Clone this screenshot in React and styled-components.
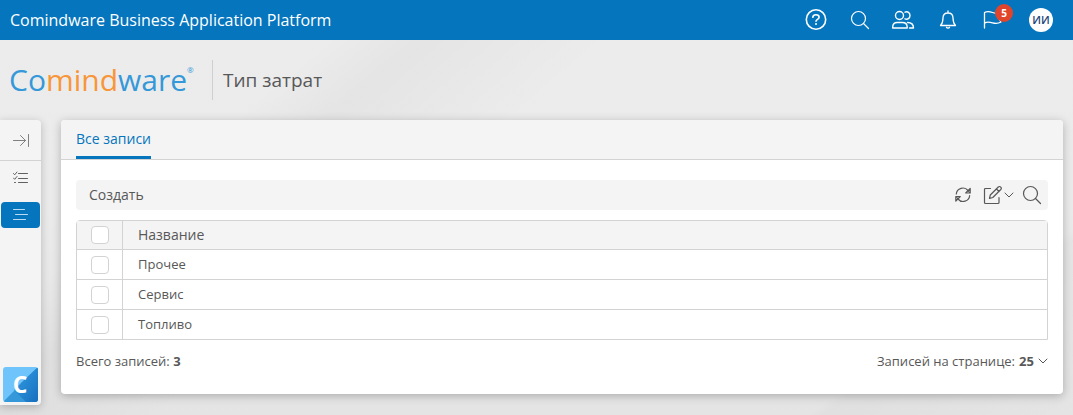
import styled, { createGlobalStyle } from 'styled-components';

const GlobalStyle = createGlobalStyle`
  * {
    box-sizing: border-box;
  }

  body {
    margin: 0;
    min-height: 100vh;
    font-family: 'Open Sans', 'Noto Sans', sans-serif;
    font-size: 13px;
    line-height: 20px;
    color: #585858;
    background:
      linear-gradient(140deg, transparent 24%, rgba(0, 0, 0, 0.03) 30%, transparent 42%),
      linear-gradient(145deg, transparent 84%, rgba(0, 0, 0, 0.02) 85%, transparent 100%),
      linear-gradient(180deg, #ececec 0%, #ebebeb 50%, #e4e4e4 100%);
  }

  button,
  input,
  select {
    margin: 0;
    font: inherit;
    color: inherit;
  }

  button {
    padding: 0;
    border: 0;
    background: none;
    cursor: pointer;
  }

  svg {
    display: block;
  }
`;

const Page = styled.div`
  display: flex;
  flex-direction: column;
  min-height: 100vh;
`;

const TopBar = styled.header`
  display: flex;
  align-items: center;
  justify-content: space-between;
  height: 40px;
  padding: 0 20px 0 10px;
  background: #0575bd;
  color: #fff;
`;

const AppName = styled.span`
  font-size: 16px;
`;

const TopActions = styled.div`
  display: flex;
  align-items: center;
  gap: 20px;
`;

const TopButton = styled.button`
  position: relative;
  display: flex;
  align-items: center;
  justify-content: center;
  width: 24px;
  height: 24px;
`;

const Badge = styled.span`
  position: absolute;
  top: -4px;
  right: -9px;
  width: 18px;
  height: 18px;
  border-radius: 50%;
  background: #e0452c;
  font-size: 10px;
  font-weight: 700;
  line-height: 18px;
  text-align: center;
`;

const Avatar = styled.button`
  width: 24px;
  height: 24px;
  margin-left: 5px;
  border-radius: 50%;
  background: #fff;
  color: #1d4678;
  font-size: 11px;
  font-weight: 600;
  line-height: 24px;
`;

const Heading = styled.div`
  display: flex;
  align-items: center;
  height: 80px;
  padding-left: 9px;
`;

const Logo = styled.div`
  display: flex;
  width: 203px;
  color: #3598d8;
  font-size: 30px;
  font-weight: 400;
  line-height: 40px;

  em {
    color: #f8963a;
    font-style: normal;
  }

  sup {
    font-size: 8px;
    line-height: 20px;
  }
`;

const Title = styled.h1`
  margin: 0;
  padding-left: 10px;
  border-left: 1px solid #cfcfcf;
  font-size: 19px;
  font-weight: 400;
  line-height: 40px;
`;

const Body = styled.div`
  display: flex;
  flex: 1;
  align-items: flex-start;
  gap: 20px;
  padding: 0 10px 10px 0;
`;

const Sidebar = styled.nav`
  display: flex;
  flex-direction: column;
  align-self: stretch;
  align-items: center;
  width: 41px;
  padding-bottom: 3px;
  border-radius: 0 4px 4px 0;
  background: #f4f4f4;
  box-shadow: 0 2px 8px rgba(0, 0, 0, 0.22);
`;

const Collapse = styled.button`
  display: flex;
  align-items: center;
  justify-content: center;
  width: 100%;
  height: 41px;
  border-bottom: 1px solid #d3d3d3;
  color: #808080;
`;

const NavLink = styled.a`
  display: flex;
  align-items: center;
  justify-content: center;
  width: 39px;
  height: 26px;
  margin-top: ${({ $active }) => ($active ? 11 : 4)}px;
  border-radius: 4px;
  background: ${({ $active }) => ($active ? '#0575bd' : 'transparent')};
  color: ${({ $active }) => ($active ? '#b9dcf2' : '#606060')};
`;

const HomeLink = styled.a`
  margin-top: auto;
`;

const Panel = styled.main`
  flex: 1;
  min-width: 0;
  border-radius: 4px;
  background: #fff;
  box-shadow: 0 2px 10px rgba(0, 0, 0, 0.25);
`;

const Tabs = styled.div`
  display: flex;
  height: 40px;
  padding: 0 15px;
  border-bottom: 1px solid #d3d3d3;
  border-radius: 4px 4px 0 0;
  background: #f4f4f4;
`;

const Tab = styled.button`
  height: 39px;
  padding-top: 2px;
  border-bottom: 3px solid #0575bd;
  color: #0575bd;
  font-size: 14px;
`;

const Content = styled.div`
  padding: 20px 15px 23px;
`;

const Toolbar = styled.div`
  display: flex;
  align-items: center;
  justify-content: space-between;
  height: 30px;
  margin-bottom: 10px;
  padding: 0 6px 0 13px;
  border-radius: 4px;
  background: #f4f4f4;
  font-size: 14px;
`;

const Tools = styled.div`
  display: flex;
  align-items: center;
  gap: 8px;
`;

const ToolButton = styled.button`
  display: flex;
  align-items: center;
  gap: 2px;
`;

const Grid = styled.table`
  width: 100%;
  border: 1px solid #d3d3d3;
  border-radius: 4px 4px 0 0;
  border-spacing: 0;

  th,
  td {
    height: 30px;
    padding: 0 15px;
    border-top: 1px solid #d3d3d3;
    font-weight: 400;
    text-align: left;
  }

  td {
    padding-bottom: 2px;
  }

  th {
    height: 28px;
    border-top: 0;
    background: #f4f4f4;
    font-size: 14px;
  }

  th:first-child,
  td:first-child {
    width: 46px;
    padding: 0 0 0 14px;
    border-right: 1px solid #d3d3d3;
  }
`;

const Checkbox = styled.input`
  display: block;
  width: 18px;
  height: 18px;
  border: 1px solid #d3d3d3;
  border-radius: 4px;
  background: #fff;
  appearance: none;

  &:checked {
    background: #0575bd;
  }
`;

const Footer = styled.div`
  display: flex;
  justify-content: space-between;
  margin-top: 11px;
`;

const PageSize = styled.label`
  display: flex;
  align-items: center;
  gap: 4px;

  select {
    width: 15px;
    padding: 0;
    border: 0;
    background: none;
    font-weight: 700;
    line-height: 20px;
    appearance: none;
  }
`;

const Icon = ({ size = 24, width, height, stroke = 1.2, children }) => (
  <svg
    width={width || size}
    height={height || size}
    viewBox={`0 0 ${width || size} ${height || size}`}
    fill="none"
    stroke="currentColor"
    strokeWidth={stroke}
    strokeLinecap="round"
    strokeLinejoin="round"
    aria-hidden="true"
  >
    {children}
  </svg>
);

const HelpIcon = () => (
  <Icon stroke={1.6}>
    <circle cx="12" cy="11.500" r="9.700" />
    <path d="M8.800 9.300c.2-1.700 1.300-2.500 3.100-2.500s3.200 1 3.200 2.500c0 2.100-3.100 2-3.100 4" />
    <path d="M12 15.900v.2" strokeWidth="2" />
  </Icon>
);

const SearchIcon = () => (
  <Icon size={20}>
    <circle cx="8.500" cy="8.500" r="7" />
    <path d="M13.500 13.500l5 5" />
  </Icon>
);

const UsersIcon = () => (
  <Icon stroke={1.4}>
    <circle cx="7.500" cy="7.500" r="4" />
    <path d="M.7 20v-1c0-3 1.800-4.500 4.500-4.500h5c2.800 0 5 1.500 5 4.500v1z" />
    <path d="M13 4.200c2.500-1.200 5 .6 5 3.300s-2.500 4.500-5 3.300" />
    <path d="M15.500 14.500c4 0 6 1.500 6 5.500h-4" />
  </Icon>
);

const BellIcon = () => (
  <Icon stroke={1.3}>
    <path d="M12 3v2M4.500 17.500c2-2 2.500-3.800 2.500-7.500 0-3 2-5 5-5s5 2 5 5c0 3.700.5 5.500 2.500 7.500z" />
    <path d="M10.500 19.300c.6 1 2.400 1 3 0" />
  </Icon>
);

const FlagIcon = () => (
  <Icon stroke={1.3}>
    <path d="M4.500 20V4.500c3-1.500 5-1 8 0s5 .8 8-.2l-2.500 5.200 3 4.500c-3 1.700-5.500 1.600-8.500.8s-5.500-1.200-8 .3" />
  </Icon>
);

const CollapseIcon = () => (
  <Icon size={16} stroke={1}>
    <path d="M.5 8.500h12M7.500 3.500l5 5-5 5M15.500 2.500v12" />
  </Icon>
);

const ChecklistIcon = () => (
  <Icon size={16} stroke={1}>
    <path d="M5.500 3.500h9M5.500 8.500h9M5.500 12.500h9M.5 3.500l1.200 1.300L4 2M.5 8l1.200 1.300L4 6.500M1.500 12.500h1" />
  </Icon>
);

const LinesIcon = () => (
  <Icon size={16} stroke={1}>
    <path d="M.5 2.500h11M2.500 7.500h12M.5 12.500h12" />
  </Icon>
);

const RefreshIcon = () => (
  <Icon size={20}>
    <path d="M2.300 9A6.600 6.600 0 0 1 14 5.500L15.500 7.500M15.700 10.500A6.600 6.600 0 0 1 4 14L2.500 12" />
    <path d="M16.200 3.500V8h-4.500zM1.800 16v-4.500h4.500z" />
  </Icon>
);

const EditIcon = () => (
  <Icon size={20}>
    <path d="M8.500 3.500h-5c-.6 0-1 .4-1 1v13c0 .6.400 1 1 1h12.500c.6 0 1-.4 1-1v-5" />
    <path d="M7.500 13.500l.8-3.500 8-8c1.600-1.600 4 .9 2.500 2.500l-8 8zM14.500 4l2.500 2.500" />
  </Icon>
);

const ChevronIcon = () => (
  <Icon width={10} height={6} stroke={1}>
    <path d="M1 1l4 4 4-4" />
  </Icon>
);

const HomeIcon = () => (
  <svg width="35" height="35" viewBox="0 0 35 35" aria-hidden="true">
    <defs>
      <linearGradient id="home-shade" x1="0" y1="0" x2="1" y2="1">
        <stop offset="0.300" stopColor="#2b91d9" />
        <stop offset="1" stopColor="#176fbe" />
      </linearGradient>
      <clipPath id="home-clip">
        <rect width="35" height="35" rx="3" />
      </clipPath>
    </defs>
    <g clipPath="url(#home-clip)">
      <path d="M0 0h35v35H0z" fill="#6fc5fb" />
      <path d="M35 0v35H0z" fill="#3598d8" />
      <path d="M22 12L35 0v35H23L11 23z" fill="url(#home-shade)" />
    </g>
    <text x="17" y="26" fill="#fff" fontSize="23" fontWeight="700" textAnchor="middle">
      C
    </text>
  </svg>
);

const rows = ['Прочее', 'Сервис', 'Топливо'];

function App() {
  return (
    <Page>
      <GlobalStyle />
      <TopBar>
        <AppName>Comindware Business Application Platform</AppName>
        <TopActions>
          <TopButton aria-label="Справка">
            <HelpIcon />
          </TopButton>
          <TopButton aria-label="Поиск">
            <SearchIcon />
          </TopButton>
          <TopButton aria-label="Пользователи">
            <UsersIcon />
          </TopButton>
          <TopButton aria-label="Уведомления">
            <BellIcon />
          </TopButton>
          <TopButton aria-label="Задачи">
            <FlagIcon />
            <Badge>5</Badge>
          </TopButton>
          <Avatar>ИИ</Avatar>
        </TopActions>
      </TopBar>

      <Heading>
        <Logo>
          <span>
            Co<em>mind</em>ware
          </span>
          <sup>®</sup>
        </Logo>
        <Title>Тип затрат</Title>
      </Heading>

      <Body>
        <Sidebar>
          <Collapse aria-label="Развернуть">
            <CollapseIcon />
          </Collapse>
          <NavLink href="#tasks" aria-label="Задачи">
            <ChecklistIcon />
          </NavLink>
          <NavLink href="#records" aria-label="Записи" $active>
            <LinesIcon />
          </NavLink>
          <HomeLink href="#home" aria-label="Главная">
            <HomeIcon />
          </HomeLink>
        </Sidebar>

        <Panel>
          <Tabs>
            <Tab>Все записи</Tab>
          </Tabs>
          <Content>
            <Toolbar>
              <button>Создать</button>
              <Tools>
                <ToolButton aria-label="Обновить">
                  <RefreshIcon />
                </ToolButton>
                <ToolButton aria-label="Изменить">
                  <EditIcon />
                  <ChevronIcon />
                </ToolButton>
                <ToolButton aria-label="Найти">
                  <SearchIcon />
                </ToolButton>
              </Tools>
            </Toolbar>

            <Grid>
              <thead>
                <tr>
                  <th>
                    <Checkbox type="checkbox" aria-label="Выбрать все" />
                  </th>
                  <th>Название</th>
                </tr>
              </thead>
              <tbody>
                {rows.map((name) => (
                  <tr key={name}>
                    <td>
                      <Checkbox type="checkbox" aria-label={name} />
                    </td>
                    <td>{name}</td>
                  </tr>
                ))}
              </tbody>
            </Grid>

            <Footer>
              <span>
                Всего записей: <b>3</b>
              </span>
              <PageSize>
                Записей на странице:
                <select defaultValue="25">
                  <option>25</option>
                  <option>50</option>
                </select>
                <ChevronIcon />
              </PageSize>
            </Footer>
          </Content>
        </Panel>
      </Body>
    </Page>
  );
}

export default App;
